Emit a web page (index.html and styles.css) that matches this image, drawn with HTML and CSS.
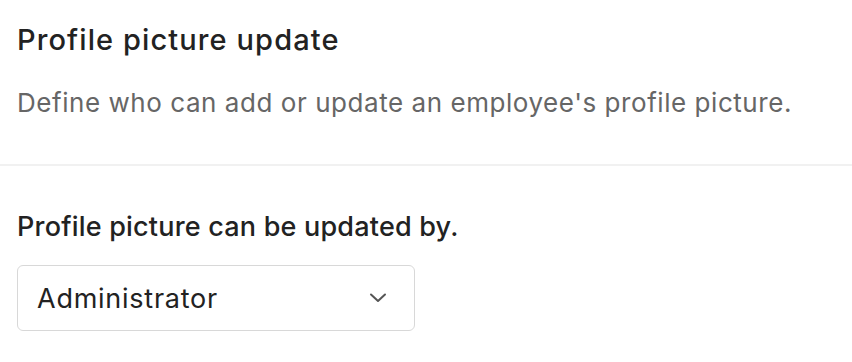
FILE: index.html
```html
<!DOCTYPE html>
<html lang="en">
<head>
    <meta charset="UTF-8">
    <title>Profile picture update</title>
    <link rel="stylesheet" href="styles.css">
</head>
<body>
    <!-- Header -->
    <div class="header">
        <h2 class="title">Profile picture update</h2>
        <p class="desc">Define who can add or update an employee's profile picture.</p>
    </div>

    <!-- Setting -->
    <div class="setting">
        <label class="label" for="updatedBy">Profile picture can be updated by.</label>
        <div class="select" id="updatedBy">
            <span class="value">Administrator</span>
            <svg class="chevron" width="18" height="10" viewBox="0 0 18 10">
                <path d="M2 1.5 L9 8 L16 1.5" fill="none" stroke="#555" stroke-width="2" stroke-linecap="round" stroke-linejoin="round"/>
            </svg>
        </div>
    </div>
</body>
</html>
```

FILE: styles.css
```css
body {
    font-family: Inter, "Noto Sans", sans-serif;
    margin: 0;
    background-color: #fff;
    color: #222;
}
.header {
    padding: 22px 17px 44px;
    border-bottom: 2px solid #f1f1f1;
}
.title {
    font-size: 29px;
    font-weight: 500;
    letter-spacing: 1.1px;
    margin: 0;
    line-height: 36px;
}
.desc {
    font-size: 26px;
    color: #666;
    letter-spacing: 0.55px;
    margin: 28px 0 0;
    line-height: 34px;
}
.setting {
    padding: 44px 17px 0;
}
.label {
    display: block;
    font-size: 27px;
    font-weight: 500;
    letter-spacing: 0.2px;
    line-height: 34px;
}
.select {
    margin-top: 21px;
    width: 398px;
    height: 66px;
    box-sizing: border-box;
    border: 1px solid #d8d8d8;
    border-radius: 6px;
    display: flex;
    align-items: center;
    justify-content: space-between;
    padding: 0 27px 0 19px;
}
.value {
    font-size: 27px;
    letter-spacing: 0.75px;
}
```
